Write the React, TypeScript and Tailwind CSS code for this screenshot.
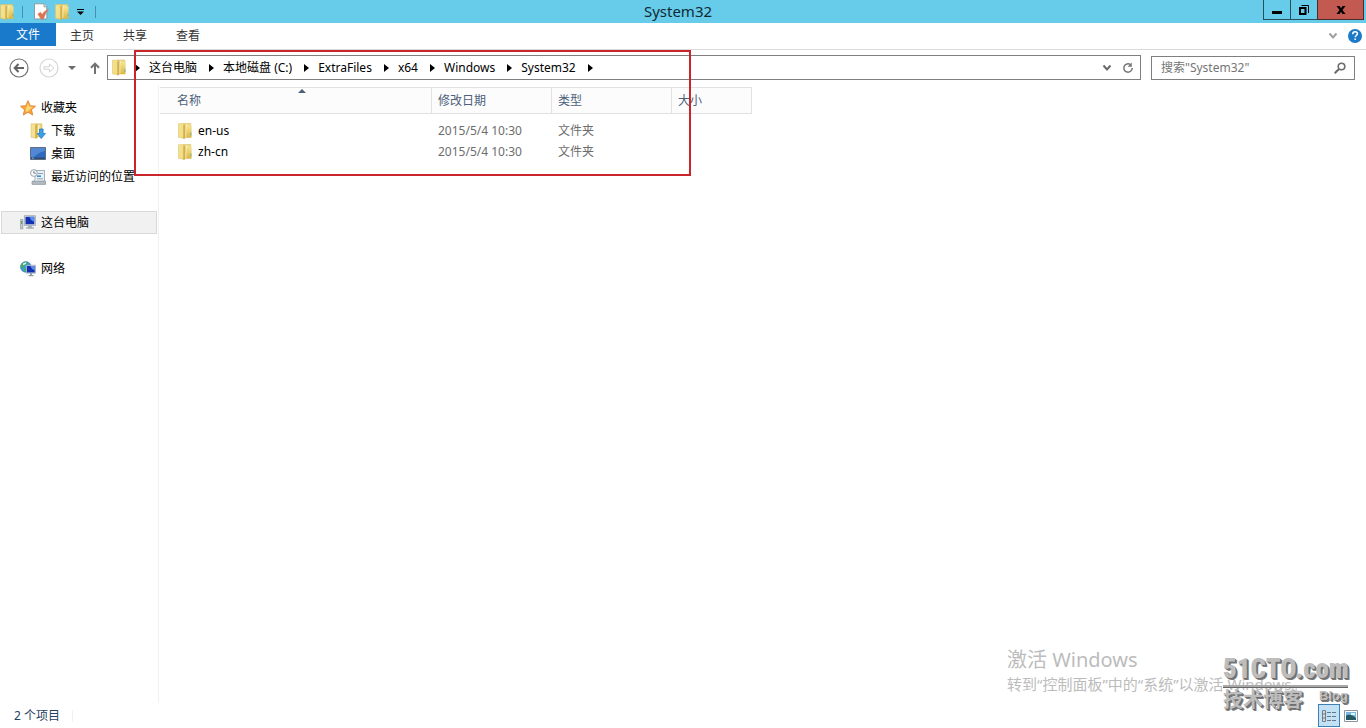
import React from 'react';

type IconProps = { className?: string };

function FolderIcon({ className = 'h-4 w-3.5' }: IconProps) {
  return (
    <svg viewBox="0 0 14 16" className={className} aria-hidden="true">
      <defs>
        <linearGradient id="folderFront" x1="0" y1="0" x2="1" y2="1">
          <stop offset="0" stopColor="#f3e290" />
          <stop offset="1" stopColor="#f2dc82" />
        </linearGradient>
        <linearGradient id="folderBack" x1="0" y1="0" x2="0" y2="1">
          <stop offset="0" stopColor="#f4e391" />
          <stop offset="1" stopColor="#dcb743" />
        </linearGradient>
      </defs>
      <path d="M5 .5h7.800v13.500H5z" fill="#efdc8a" stroke="#dcc063" strokeWidth=".6" />
      <path d="M7.500 1.800h1.800v12H7.500z" fill="#fbf4cb" />
      <path d="M8.300 3.200 13.500 2.800v12H8.300z" fill="url(#folderBack)" />
      <path d="M.5.700h5.500v14.500l-5.500-.9z" fill="url(#folderFront)" stroke="#dfc468" strokeWidth=".6" />
      <path d="M5.300 2.200 7.300 1.200v14.200l-2 .5z" fill="#d3b04a" />
      <path d="M12.900 9.500v3" stroke="#6fae9c" strokeWidth=".9" />
    </svg>
  );
}

function PropertiesIcon() {
  return (
    <svg viewBox="0 0 16 17" className="h-[17px] w-4" aria-hidden="true">
      <path d="M1.500.8h9.600l2.700 2.800v12.300H1.500z" fill="#fff" stroke="#7e8b93" strokeWidth=".8" />
      <path d="M11 .8v3h2.800" fill="#dce4e8" stroke="#7e8b93" strokeWidth=".8" />
      <path d="M4.800 11 7.500 9.300 9.200 11.500C10.500 9.200 12.300 7.500 15.600 6.200c-2.300 2.600-3.900 5.600-4.800 9.300L8.200 16.300z" fill="#dc7350" stroke="#dc7350" strokeWidth=".5" />
    </svg>
  );
}

function StarIcon() {
  return (
    <svg viewBox="0 0 16 16" className="size-4" aria-hidden="true">
      <path d="M8 .7 10.200 5.700 15.500 6.200 11.500 9.700 12.700 15 8 12.300 3.300 15 4.500 9.700.5 6.200 5.800 5.700z" fill="#f9a83a" stroke="#d9772b" strokeWidth=".8" />
      <path d="M8 3 9.300 6.600 13 7 10 9.200 8 11.200 5.500 12 6 9z" fill="#fed777" />
    </svg>
  );
}

function DownloadIcon() {
  return (
    <svg viewBox="0 0 16 16" className="size-4" aria-hidden="true">
      <path d="M6 .8h6v13H6z" fill="#ecd47b" stroke="#d1b35a" strokeWidth=".5" />
      <path d="M7.500 2h2v11h-2z" fill="#faf2c4" />
      <path d="M1 .8h5v14.400l-5-.8z" fill="#f4e090" stroke="#d8bb60" strokeWidth=".5" />
      <path d="M5.200 2 7.500.9v14l-2.300.6z" fill="#d1b04d" />
      <path d="M9.500 6h3.600v4.500h2.400L11.300 15.600 7.200 10.500h2.300z" fill="#3aa0e8" stroke="#1c72b8" strokeWidth=".7" />
    </svg>
  );
}

function DesktopIcon() {
  return (
    <svg viewBox="0 0 16 13" className="h-[13px] w-4" aria-hidden="true">
      <path d="M.5.500h15v12H.5z" fill="#2f69bf" stroke="#5c6d86" />
      <path d="M1 1h14v3c-5 1-8.500 3.200-11 6H1z" fill="#5287d4" />
      <path d="M1 10.500h14V12H1z" fill="#314a6e" />
      <path d="M2 11.200h2" stroke="#9cc4ee" strokeWidth=".8" />
    </svg>
  );
}

function RecentIcon() {
  return (
    <svg viewBox="0 0 16 16" className="size-4" aria-hidden="true">
      <path d="M5 1.500h9.500v11H3.500l1.500-2z" fill="#e9f1f7" stroke="#8c9aa5" strokeWidth=".8" />
      <path d="M8 4.500h5M7 9.800h6" stroke="#8ca4b3" />
      <path d="M7 7.200h4" stroke="#3f92cf" strokeWidth="1.600" />
      <path d="m2 12.200 13.500-.2v3.400H2z" fill="#b4bcc3" stroke="#7d878f" strokeWidth=".6" />
      <circle cx="3.900" cy="4" r="3.400" fill="#f8fafb" stroke="#8e9aa3" strokeWidth=".9" />
      <path d="M3.900 1.900V4.200h1.900" fill="none" stroke="#56636d" strokeWidth=".8" />
    </svg>
  );
}

function ComputerIcon() {
  return (
    <svg viewBox="0 0 16 15" className="h-[15px] w-4" aria-hidden="true">
      <path d="M.6 4.500h2.200v9.400H.6z" fill="#c4cdd1" stroke="#7c8990" strokeWidth=".6" />
      <path d="M1.700 6v3" stroke="#4f9c48" />
      <path d="M4.400.7h11v9.700h-11z" fill="#dfe5ea" stroke="#8d979e" strokeWidth=".7" />
      <path d="M5.500 1.800h8.800v7.500H5.500z" fill="#1230b4" />
      <path d="M9.500 1.800h4.800v5c-2.700-.6-4.200-2.400-4.800-5z" fill="#5b8cec" />
      <path d="M8.500 10.500h3l.5 1.800h1.800v1.500H6.200v-1.500H8z" fill="#a5adb3" />
    </svg>
  );
}

function NetworkIcon() {
  return (
    <svg viewBox="0 0 16 16" className="size-4" aria-hidden="true">
      <circle cx="5.800" cy="5.900" r="5.300" fill="#3b9cd8" stroke="#2a74ae" strokeWidth=".6" />
      <path d="M2 2.500c2-1.700 4-1.800 5.500-1.200L6 4 3.500 5 2.800 7.500.9 6C.8 4.500 1.300 3.300 2 2.500zM5 7l2.500 1v3H5.500L4 9z" fill="#42ad58" />
      <path d="M3 3.500 6 2" stroke="#e4f6e8" strokeWidth="1.400" />
      <path d="M6.300 4.200h9.200v8H6.300z" fill="#d9e0e6" stroke="#87939c" strokeWidth=".6" />
      <path d="M7 5h7.800v6.500H7z" fill="#1230b4" />
      <path d="M10.500 5h4.300v4.300c-2.300-.6-3.800-2.200-4.300-4.300z" fill="#5b8cec" />
      <path d="M10 12.200h2v1.800h1.500v1.300h-5V14H10z" fill="#929ca4" />
    </svg>
  );
}

function ArrowRight() {
  return (
    <svg viewBox="0 0 5 8" className="h-2 w-[5px] shrink-0" aria-hidden="true">
      <path d="M0 0v8l5-4z" fill="#000" />
    </svg>
  );
}

function ChevronDown({ color }: { color: string }) {
  return (
    <svg viewBox="0 0 10 8" className="h-2 w-2.5" aria-hidden="true">
      <path d="m1.500 1.500 3.500 4 3.500-4" fill="none" stroke={color} strokeWidth="2" />
    </svg>
  );
}

const crumbs = ['这台电脑', '本地磁盘 (C:)', 'ExtraFiles', 'x64', 'Windows', 'System32'];

const favorites = [
  { label: '下载', icon: <DownloadIcon /> },
  { label: '桌面', icon: <DesktopIcon /> },
  { label: '最近访问的位置', icon: <RecentIcon /> },
];

const files = [
  { name: 'en-us', modified: '2015/5/4 10:30', type: '文件夹' },
  { name: 'zh-cn', modified: '2015/5/4 10:30', type: '文件夹' },
];

function TitleBar() {
  return (
    <header className="grid h-[23px] grid-cols-[1fr_auto_1fr] bg-[#67cbea] pr-0.5">
      <div className="flex items-center">
        <FolderIcon />
        <span className="ml-2 h-3 w-px bg-[#4a8faa]" />
        <button type="button" aria-label="属性" className="ml-2.5"><PropertiesIcon /></button>
        <button type="button" aria-label="新建文件夹" className="ml-1.5"><FolderIcon /></button>
        <button type="button" aria-label="自定义快速访问工具栏" className="ml-2">
          <svg viewBox="0 0 7 6" className="h-1.5 w-[7px]"><path d="M0 0h7v1H0zM0 2.500h7L3.500 6z" fill="#000" /></svg>
        </button>
        <span className="ml-[11px] h-3 w-px bg-[#4a8faa]" />
      </div>
      <h1 className="pr-2 text-[15px] leading-[23px] text-[#102a33]">System32</h1>
      <div className="flex h-5 justify-end">
        <button type="button" aria-label="最小化" className="flex w-[28px] items-center justify-center border border-t-0 border-[#27505e]">
          <svg viewBox="0 0 10 10" className="size-2.5"><path d="M0 6h10v3H0z" /></svg>
        </button>
        <button type="button" aria-label="向下还原" className="flex w-[26px] items-center justify-center border-b border-[#27505e]">
          <svg viewBox="0 0 10 10" className="size-2.5"><path d="M1 3h5.500v6H1z" fill="none" stroke="#000" strokeWidth="2" /><path d="M2.500.5h7V8" fill="none" stroke="#000" /></svg>
        </button>
        <button type="button" aria-label="关闭" className="flex w-[47px] items-center justify-center border border-t-0 border-[#4c2b2b] bg-[#c35a51]">
          <svg viewBox="0 0 10 10" className="size-2.5"><path d="M.5 1h3L5 3.300 6.500 1h3L6.500 5l3 4h-3L5 6.700 3.500 9h-3l3-4z" /></svg>
        </button>
      </div>
    </header>
  );
}

function Ribbon() {
  return (
    <nav className="flex h-[27px] items-stretch border-b border-[#d9dadb] text-[#333]">
      <button type="button" className="mb-[3px] w-14 bg-[#1979ca] text-white">文件</button>
      <div className="ml-3.5 flex gap-[29px]">
        <button type="button">主页</button>
        <button type="button">共享</button>
        <button type="button">查看</button>
      </div>
      <div className="ml-auto flex items-center gap-2.5 pr-1">
        <button type="button" aria-label="展开功能区"><ChevronDown color="#a0a0a0" /></button>
        <button type="button" aria-label="帮助">
          <svg viewBox="0 0 14 14" className="size-3.5">
            <circle cx="7" cy="7" r="7" fill="#1c7ac8" />
            <path d="M4.700 5.200c0-1.600 1-2.400 2.400-2.400s2.300.8 2.300 2c0 1.700-2.200 1.700-2.200 3.500" fill="none" stroke="#fff" strokeWidth="1.500" />
            <path d="M6.400 9.500H8V11H6.400z" fill="#fff" />
          </svg>
        </button>
      </div>
    </nav>
  );
}

function AddressBar() {
  return (
    <div className="flex items-center py-[5px] pr-[11px] pl-[9px]">
      <button type="button" aria-label="后退">
        <svg viewBox="0 0 20 20" className="size-5"><circle cx="10" cy="10" r="9" fill="none" stroke="#727272" strokeWidth="1.200" /><path d="M15 10H6M9.500 6 5.700 10l3.800 4" fill="none" stroke="#636363" strokeWidth="2" /></svg>
      </button>
      <button type="button" aria-label="前进" className="ml-2.5">
        <svg viewBox="0 0 20 20" className="size-5"><circle cx="10" cy="10" r="9" fill="none" stroke="#d6d6d6" strokeWidth="1.200" /><path d="M5 8.800h5.500V6l4.300 4-4.300 4v-2.800H5z" fill="none" stroke="#d2d2d2" /></svg>
      </button>
      <button type="button" aria-label="最近位置" className="ml-[9px]">
        <svg viewBox="0 0 8 4" className="h-1 w-2"><path d="M0 0h8L4 4z" fill="#6a6a6a" /></svg>
      </button>
      <button type="button" aria-label="上移" className="ml-3.5">
        <svg viewBox="0 0 10 12" className="h-3 w-2.5"><path d="M5 12V1.500M1 5.800 5 1.600l4 4.200" fill="none" stroke="#717171" strokeWidth="2" /></svg>
      </button>
      <div className="ml-[7px] flex h-[25px] flex-1 items-center border border-[#7f7f7f] pr-1.5 pl-1">
        <FolderIcon className="h-[17px] w-3.5" />
        <ol className="ml-[9px] flex items-center">
          {crumbs.map((crumb) => (
            <li key={crumb} className="flex items-center">
              <ArrowRight />
              <button type="button" className="mr-3 ml-[9px] text-black">{crumb}</button>
            </li>
          ))}
          <li><ArrowRight /></li>
        </ol>
        <button type="button" aria-label="历史记录" className="ml-auto"><ChevronDown color="#6b6b6b" /></button>
        <button type="button" aria-label="刷新" className="ml-2.5">
          <svg viewBox="0 0 12 12" className="size-3"><path d="M8.500 2.600A4.200 4.200 0 1 0 10.200 6" fill="none" stroke="#777" strokeWidth="1.500" /><path d="M9.800.5v4.200H5.600z" fill="#777" /></svg>
        </button>
      </div>
      <label className="ml-2.5 flex h-6 w-[204px] items-center border border-[#7f7f7f] pr-2 pl-[9px]">
        <input type="search" aria-label="搜索" placeholder={'搜索"System32"'} className="min-w-0 flex-1 outline-none placeholder:text-[#757575]" />
        <svg viewBox="0 0 12 12" className="size-3" aria-hidden="true"><circle cx="7.500" cy="4.500" r="3.300" fill="none" stroke="#6c6c6c" strokeWidth="1.600" /><path d="m5 7-4.300 4.300" stroke="#6c6c6c" strokeWidth="2" /></svg>
      </label>
    </div>
  );
}

function Sidebar() {
  return (
    <aside className="w-[159px] shrink-0 border-r border-[#f1f1f1] pt-[11px] pr-px pl-px leading-[23px] text-black">
      <a href="#favorites" className="flex items-center gap-[5px] pl-[19px]"><StarIcon />收藏夹</a>
      {favorites.map((item) => (
        <a key={item.label} href="#favorites" className="flex items-center gap-[5px] pl-[29px] whitespace-nowrap">
          {item.icon}
          {item.label}
        </a>
      ))}
      <a href="#computer" className="mt-[23px] flex h-[23px] items-center gap-[5px] border border-[#d9d9d9] bg-[#f1f1f1] pl-[18px]"><ComputerIcon />这台电脑</a>
      <a href="#network" className="mt-[23px] flex items-center gap-[5px] pl-[19px]"><NetworkIcon />网络</a>
    </aside>
  );
}

function FileTable() {
  return (
    <table className="ml-px w-[592px] table-fixed border-separate border-spacing-0 self-start text-left">
      <thead>
        <tr className="h-[27px] bg-[#fcfcfc] text-[#4c607a] *:border-y *:border-r *:border-[#e0e1e2] *:p-0 *:font-normal">
          <th className="w-[272px]" aria-sort="ascending">
            <div className="relative pl-[17px]">
              名称
              <svg viewBox="0 0 8 4" className="absolute -top-1 left-[138px] h-1 w-2" aria-hidden="true"><path d="M4 0 8 4H0z" fill="#4c607a" /></svg>
            </div>
          </th>
          <th className="w-[120px]"><div className="pl-1.5">修改日期</div></th>
          <th className="w-[120px]"><div className="pl-1.5">类型</div></th>
          <th className="w-20"><div className="pl-1.5">大小</div></th>
        </tr>
      </thead>
      <tbody className="text-[#6d6d6d] before:block before:h-1.5">
        {files.map((file) => (
          <tr key={file.name} className="h-[21px] *:p-0">
            <td><div className="flex items-center gap-1.5 pl-[18px] text-black"><FolderIcon />{file.name}</div></td>
            <td><div className="pl-1.5">{file.modified}</div></td>
            <td><div className="pl-1.5">{file.type}</div></td>
            <td />
          </tr>
        ))}
      </tbody>
    </table>
  );
}

function StatusBar() {
  return (
    <footer className="flex h-[25px] items-center pr-2 pl-3.5 text-[#26405f]">
      <span>2 个项目</span>
      <span className="ml-3 h-3 w-px bg-[#f0f0f0]" />
      <div className="ml-auto flex items-center gap-1">
        <button type="button" aria-label="详细信息" className="flex h-[23px] w-[22px] items-center justify-center border border-[#3f7fb3] bg-[#c3e1f5]">
          <svg viewBox="0 0 14 12" className="h-3 w-3.5">
            <path d="M.5.500h3v11h-3z" fill="#fff" stroke="#75818c" />
            <path d="M1.500 2h1M1.500 6h1M1.500 10h1M.5 4h3M.5 8h3" stroke="#4c5d6b" />
            <path d="M5 2.500h4M10 2.500h4M5 6.500h4M10 6.500h4M5 10.500h4M10 10.500h4" stroke="#647887" />
          </svg>
        </button>
        <button type="button" aria-label="大图标">
          <svg viewBox="0 0 14 12" className="h-3 w-3.5">
            <path d="M.5.500h13v11H.5z" fill="#fff" stroke="#8997a2" />
            <path d="M2 2h10v8H2z" fill="#76b7e5" />
            <path d="M2 5.500c3-1.500 6-1 10 2.500v2H2z" fill="#265a63" />
            <path d="M7 3h4v2H7z" fill="#e7f5fd" />
          </svg>
        </button>
      </div>
    </footer>
  );
}

export default function App() {
  return (
    <div className="relative flex min-h-screen flex-col overflow-hidden bg-white font-['Noto_Sans','Noto_Sans_CJK_SC',sans-serif] text-xs leading-4">
      <TitleBar />
      <Ribbon />
      <AddressBar />
      <main className="flex flex-1">
        <Sidebar />
        <div className="pt-0.5">
          <FileTable />
        </div>
      </main>
      <StatusBar />

      <div className="pointer-events-none absolute top-[50px] left-[134px] h-[126px] w-[557px] border-2 border-[#c9252b]" />

      <div className="pointer-events-none absolute right-[61px] bottom-[34px] w-[298px] whitespace-nowrap text-[#bcbcbc]">
        <p className="text-xl leading-7">激活 Windows</p>
        <p className="text-[15px] leading-5">转到“控制面板”中的“系统”以激活 Windows。</p>
      </div>

      <div className="pointer-events-none absolute right-[18px] bottom-4 w-[125px] font-bold text-[#bdbdbd] [text-shadow:1px_1px_0_#6f6f6f,2px_2px_0_#7a7a7a]">
        <p className="font-['Liberation_Sans_Narrow','Roboto_Condensed',sans-serif] text-[27px] leading-8 font-black">51CTO.com</p>
        <div className="h-[3px] border-b border-[#666] bg-[#a9a9a9]" />
        <div className="flex items-start justify-between">
          <span className="text-xl leading-6">技术博客</span>
          <span className="font-['Liberation_Sans',sans-serif] text-[13px] leading-4">Blog</span>
        </div>
      </div>
    </div>
  );
}
